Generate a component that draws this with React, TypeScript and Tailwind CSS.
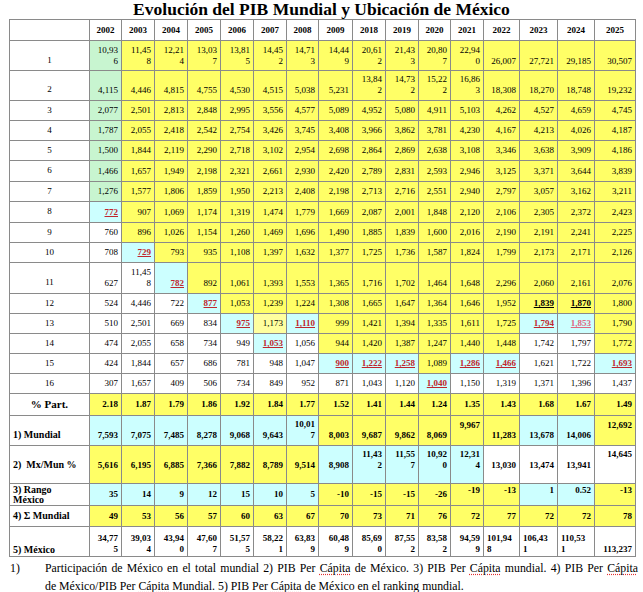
import React from 'react';
import clsx from 'clsx';

const BG: Record<string, string> = {
  Y: 'bg-[#ffff66]',
  G: 'bg-[#c8f5d0]',
  C: 'bg-[#ccffff]',
  W: 'bg-white',
  L: 'bg-[#ffff9e]',
};

const YEARS = ['2002', '2003', '2004', '2005', '2006', '2007', '2008', '2009', '2018', '2019', '2020', '2021', '2022', '2023', '2024', '2025'];
const WIDTHS = ['w-[32px]', 'w-[33px]', 'w-[33px]', 'w-[33px]', 'w-[33px]', 'w-[33px]', 'w-[32px]', 'w-[34px]', 'w-[33px]', 'w-[33px]', 'w-[32px]', 'w-[33px]', 'w-[36px]', 'w-[38px]', 'w-[37px]', 'w-[41px]'];

type RowDef = {
  label: React.ReactNode;
  labelCls: string;
  h: string;
  cellCls: string;
  topCls: string;
  bold: boolean;
  bgs: string;
  vals: string;
};

const numLabel = 'text-center align-middle font-normal text-[9px]';
const mid = 'align-middle';
const boldLabel = 'text-left pl-[3px] font-bold text-[10px] leading-[10px]';

const ROWS: RowDef[] = [
  { label: '1', labelCls: 'text-center align-bottom pb-[3px] text-[9px]', h: 'h-[30px]', cellCls: 'align-bottom pb-[3px]', topCls: 'align-top', bold: false, bgs: 'GYYYYYYYYYYYYYYY', vals: '10,93|6 11,45|8 12,21|4 13,03|7 13,81|5 14,45|2 14,71|3 14,44|9 20,61|2 21,43|3 20,80|7 22,94|0 26,007 27,721 29,185 30,507' },
  { label: '2', labelCls: 'text-center align-bottom pb-[4px] text-[9px]', h: 'h-[30px]', cellCls: 'align-bottom pb-[4px]', topCls: 'align-top', bold: false, bgs: 'GYYYYYYYYYYYYYYY', vals: '4,115 4,446 4,815 4,755 4,530 4,515 5,038 5,231 13,84|2 14,73|2 15,22|2 16,86|3 18,308 18,270 18,748 19,232' },
  { label: '3', labelCls: numLabel, h: 'h-[20px]', cellCls: mid, topCls: mid, bold: false, bgs: 'GYYYYYYYYYYYYYYY', vals: '2,077 2,501 2,813 2,848 2,995 3,556 4,577 5,089 4,952 5,080 4,911 5,103 4,262 4,527 4,659 4,745' },
  { label: '4', labelCls: numLabel, h: 'h-[20px]', cellCls: mid, topCls: mid, bold: false, bgs: 'GYYYYYYYYYYYYYYY', vals: '1,787 2,055 2,418 2,542 2,754 3,426 3,745 3,408 3,966 3,862 3,781 4,230 4,167 4,213 4,026 4,187' },
  { label: '5', labelCls: numLabel, h: 'h-[20px]', cellCls: mid, topCls: mid, bold: false, bgs: 'GYYYYYYYYYYYYYYY', vals: '1,500 1,844 2,119 2,290 2,718 3,102 2,954 2,698 2,864 2,869 2,638 3,108 3,346 3,638 3,909 4,186' },
  { label: '6', labelCls: numLabel, h: 'h-[21px]', cellCls: mid, topCls: mid, bold: false, bgs: 'GYYYYYYYYYYYYYYY', vals: '1,466 1,657 1,949 2,198 2,321 2,661 2,930 2,420 2,789 2,831 2,593 2,946 3,125 3,371 3,644 3,839' },
  { label: '7', labelCls: numLabel, h: 'h-[20px]', cellCls: mid, topCls: mid, bold: false, bgs: 'GYYYYYYYYYYYYYYY', vals: '1,276 1,577 1,806 1,859 1,950 2,213 2,408 2,198 2,713 2,716 2,551 2,940 2,797 3,057 3,162 3,211' },
  { label: '8', labelCls: numLabel, h: 'h-[21px]', cellCls: mid, topCls: mid, bold: false, bgs: 'CYYYYYYYYYYYYYYY', vals: '*772 907 1,069 1,174 1,319 1,474 1,779 1,669 2,087 2,001 1,848 2,120 2,106 2,305 2,372 2,423' },
  { label: '9', labelCls: numLabel, h: 'h-[20px]', cellCls: mid, topCls: mid, bold: false, bgs: 'WYYYYYYYYYYYYYYY', vals: '760 896 1,026 1,154 1,260 1,469 1,696 1,490 1,885 1,839 1,600 2,016 2,190 2,191 2,241 2,225' },
  { label: '10', labelCls: numLabel, h: 'h-[20px]', cellCls: mid, topCls: mid, bold: false, bgs: 'WCYYYYYYYYYYYYYY', vals: '708 *729 793 935 1,108 1,397 1,632 1,377 1,725 1,736 1,587 1,824 1,799 2,173 2,171 2,126' },
  { label: '11', labelCls: 'text-center align-bottom pb-[4px] text-[9px]', h: 'h-[31px]', cellCls: 'align-bottom pb-[4px]', topCls: 'align-top', bold: false, bgs: 'WWCYYYYYYYYYYYYY', vals: '627 11,45|8 *782 892 1,061 1,393 1,553 1,365 1,716 1,702 1,464 1,648 2,296 2,060 2,161 2,076' },
  { label: '12', labelCls: numLabel, h: 'h-[20px]', cellCls: mid, topCls: mid, bold: false, bgs: 'WWWCYYYYYYYYYYYY', vals: '524 4,446 722 *877 1,053 1,239 1,224 1,308 1,665 1,647 1,364 1,646 1,952 _1,839 _1,870 1,800' },
  { label: '13', labelCls: numLabel, h: 'h-[20px]', cellCls: mid, topCls: mid, bold: false, bgs: 'WWWWCLCYYYYYYCCY', vals: '510 2,501 669 834 *975 1,173 *1,110 999 1,421 1,394 1,335 1,611 1,725 *1,794 ^1,853 1,790' },
  { label: '14', labelCls: numLabel, h: 'h-[20px]', cellCls: mid, topCls: mid, bold: false, bgs: 'WWWWWCWYYYYYYWWY', vals: '474 2,055 658 734 949 *1,053 1,056 944 1,420 1,387 1,247 1,440 1,448 1,742 1,797 1,772' },
  { label: '15', labelCls: numLabel, h: 'h-[20px]', cellCls: mid, topCls: mid, bold: false, bgs: 'WWWWWWWCCCYCCWWC', vals: '424 1,844 657 686 781 948 1,047 *900 *1,222 *1,258 1,089 *1,286 *1,466 1,621 1,722 *1,693' },
  { label: '16', labelCls: numLabel, h: 'h-[20px]', cellCls: mid, topCls: mid, bold: false, bgs: 'WWWWWWWWWWCWWWWW', vals: '307 1,657 409 506 734 849 952 871 1,043 1,120 *1,040 1,150 1,319 1,371 1,396 1,437' },
  { label: '% Part.', labelCls: 'text-center align-middle font-bold text-[11px]', h: 'h-[22px]', cellCls: mid, topCls: mid, bold: true, bgs: 'YYYYYYYYYYYYYYYY', vals: '2.18 1.87 1.79 1.86 1.92 1.84 1.77 1.52 1.41 1.44 1.24 1.35 1.43 1.68 1.67 1.49' },
  { label: '1) Mundial', labelCls: boldLabel + ' align-bottom pb-[5px]', h: 'h-[30px]', cellCls: 'align-bottom pb-[4px]', topCls: 'align-top pt-[4px]', bold: true, bgs: 'CCCCCCCYYYYYYCCY', vals: '7,593 7,075 7,485 8,278 9,068 9,643 10,01|7 8,003 9,687 9,862 8,069 !9,967 11,283 13,678 14,006 !12,692' },
  { label: '2)\u00a0 Mx/Mun %', labelCls: boldLabel + ' align-bottom pb-[13px]', h: 'h-[38px]', cellCls: 'align-bottom pb-[12px]', topCls: 'align-top pt-[3px]', bold: true, bgs: 'YYYYYYYCCCCCWWWW', vals: '5,616 6,195 6,885 7,366 7,882 8,789 9,514 8,908 11,43|2 11,55|7 10,92|0 12,31|4 13,030 13,474 13,941 !14,645' },
  { label: <>3) Rango<br />México</>, labelCls: boldLabel + ' align-middle', h: 'h-[22px]', cellCls: mid, topCls: 'align-top pt-[1px]', bold: true, bgs: 'CCCCCCCYYYYYYCCY', vals: '35 14 9 12 15 10 5 -10 -15 -15 -26 !-19 !-13 !1 !0.52 !-13' },
  { label: '4) \u03a3 Mundial', labelCls: boldLabel + ' align-middle', h: 'h-[21px]', cellCls: mid, topCls: mid, bold: true, bgs: 'YYYYYYYYYYYYYYYY', vals: '49 53 56 57 60 63 67 70 73 71 76 72 77 72 72 78' },
  { label: '5) México', labelCls: boldLabel + ' align-bottom pb-[1px]', h: 'h-[30px]', cellCls: 'align-bottom pb-[1px]', topCls: 'align-top', bold: true, bgs: 'WWWWWWWWWWWWWWWW', vals: '34,77|5 39,03|4 43,94|0 47,60|7 51,57|5 58,22|1 63,83|9 60,48|9 85,69|0 87,55|2 83,58|2 94,59|9 <101,94|8 <106,43|1 <110,53|1 113,237' },
];

const BORDER = 'border border-[#8a8a8a]';

function Cell({ tok, bg, row }: { tok: string; bg: string; row: RowDef }) {
  let flags = '';
  let t = tok;
  while (t.length > 0 && '*^_!<'.includes(t[0])) {
    flags += t[0];
    t = t.slice(1);
  }
  const lines = t.split('|');
  const inner = lines.map((l, i) => (
    <React.Fragment key={i}>
      {i > 0 && <br />}
      {l}
    </React.Fragment>
  ));
  let content: React.ReactNode = inner;
  if (flags.includes('*')) content = <span className="font-bold text-[#c0262c] underline underline-offset-1">{inner}</span>;
  else if (flags.includes('^')) content = <span className="font-bold text-[#e0667f] underline underline-offset-1">{inner}</span>;
  else if (flags.includes('_')) content = <span className="font-bold underline underline-offset-1">{inner}</span>;
  return (
    <td
      className={clsx(
        BORDER,
        BG[bg],
        'px-[3px] text-[9px] leading-[11px]',
        row.bold && 'font-bold',
        flags.includes('!') ? row.topCls : row.cellCls,
        flags.includes('<') ? 'text-left' : 'text-right'
      )}
    >
      {content}
    </td>
  );
}

function Cap() {
  return <span className="underline decoration-dotted decoration-[#e03030] underline-offset-2">Cápita</span>;
}

export default function App() {
  return (
    <div className="w-[643px] h-[592px] overflow-hidden bg-white text-black font-['Liberation_Serif','Times_New_Roman',serif]">
      <div className="text-center font-bold text-[17.5px] leading-[19px] h-[19px]">Evolución del PIB Mundial y Ubicación de México</div>
      <table className="ml-[9px] w-[626px] table-fixed border-collapse">
        <colgroup>
          <col className="w-[80px]" />
          {WIDTHS.map((w, i) => (
            <col key={i} className={w} />
          ))}
        </colgroup>
        <tbody>
          <tr className="h-[21px]">
            <td className={clsx(BORDER, 'bg-white')}></td>
            {YEARS.map((y) => (
              <td key={y} className={clsx(BORDER, 'bg-white text-center align-middle font-bold text-[9px] leading-[11px]')}>
                {y}
              </td>
            ))}
          </tr>
          {ROWS.map((row, ri) => {
            const toks = row.vals.split(' ');
            return (
              <tr key={ri} className={row.h}>
                <td className={clsx(BORDER, 'bg-white', row.labelCls)}>{row.label}</td>
                {toks.map((tok, ci) => (
                  <Cell key={ci} tok={tok} bg={row.bgs[ci]} row={row} />
                ))}
              </tr>
            );
          })}
        </tbody>
      </table>
      <div className="flex pt-[2px] text-[11.8px] leading-[18px]">
        <div className="w-[45px] pl-[10px] shrink-0">1)</div>
        <div className="w-[593px]">
          <div className="whitespace-nowrap text-justify [text-align-last:justify]">
            Participación de México en el total mundial 2) PIB Per <Cap /> de México. 3) PIB Per <Cap /> mundial. 4) PIB Per <Cap />
          </div>
          <div className="whitespace-nowrap">
            de México/PIB Per <Cap /> Mundial. 5) PIB Per <Cap /> de México en el ranking mundial.
          </div>
        </div>
      </div>
    </div>
  );
}
